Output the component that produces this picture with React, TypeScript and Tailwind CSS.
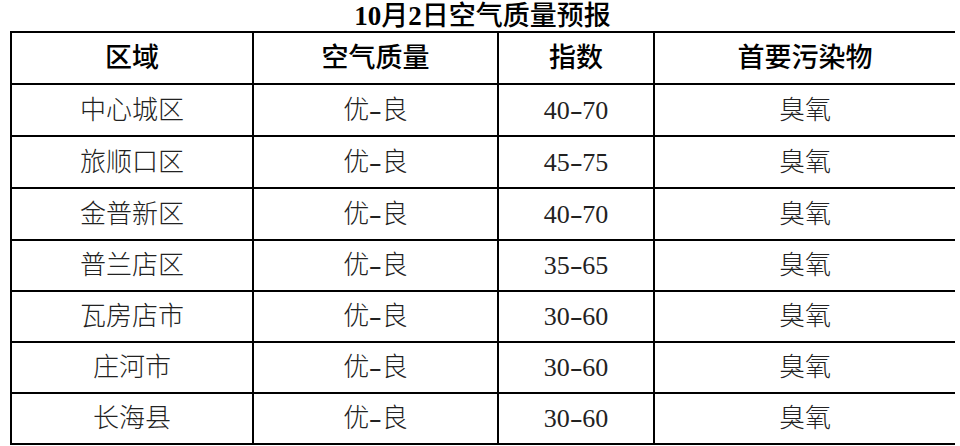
import React from "react";

const rows: [string, string, string, string][] = [
  ["中心城区", "优-良", "40-70", "臭氧"],
  ["旅顺口区", "优-良", "45-75", "臭氧"],
  ["金普新区", "优-良", "40-70", "臭氧"],
  ["普兰店区", "优-良", "35-65", "臭氧"],
  ["瓦房店市", "优-良", "30-60", "臭氧"],
  ["庄河市", "优-良", "30-60", "臭氧"],
  ["长海县", "优-良", "30-60", "臭氧"],
];

const heights = ["h-[50px]", "h-[50px]", "h-[50px]", "h-[49px]", "h-[49px]", "h-[49px]", "h-[49px]"];

function Cell({ text }: { text: string }) {
  const idx = text.indexOf("-");
  if (idx < 0) return <>{text}</>;
  return (
    <>
      {text.slice(0, idx)}
      <span className="inline-block scale-x-150 mx-[2px]">-</span>
      {text.slice(idx + 1)}
    </>
  );
}

export default function App() {
  return (
    <div className="w-[960px] h-[446px] bg-white overflow-hidden font-['Liberation_Serif','Noto_Sans_CJK_SC',serif]">
      <div className="pl-[10px] w-[955px]">
        <div className="h-[31px] flex items-center justify-center text-[27px] font-[500] text-black leading-none pt-[2px]">
          <span className="font-bold">10</span>月<span className="font-bold">2</span>日空气质量预报
        </div>
        <div className="grid grid-cols-[240px_243px_154px_300px] gap-[2px] bg-black p-[2px]">
          {["区域", "空气质量", "指数", "首要污染物"].map((h) => (
            <div key={h} className="bg-white h-[50px] flex items-center justify-center text-[27px] font-[500] text-black">
              {h}
            </div>
          ))}
          {rows.map((r, i) =>
            r.map((c, j) => (
              <div
                key={i + "-" + j}
                className={`bg-white ${heights[i]} flex items-center justify-center text-[26px] font-[300] text-[#222]`}
              >
                <Cell text={c} />
              </div>
            ))
          )}
        </div>
      </div>
    </div>
  );
}
